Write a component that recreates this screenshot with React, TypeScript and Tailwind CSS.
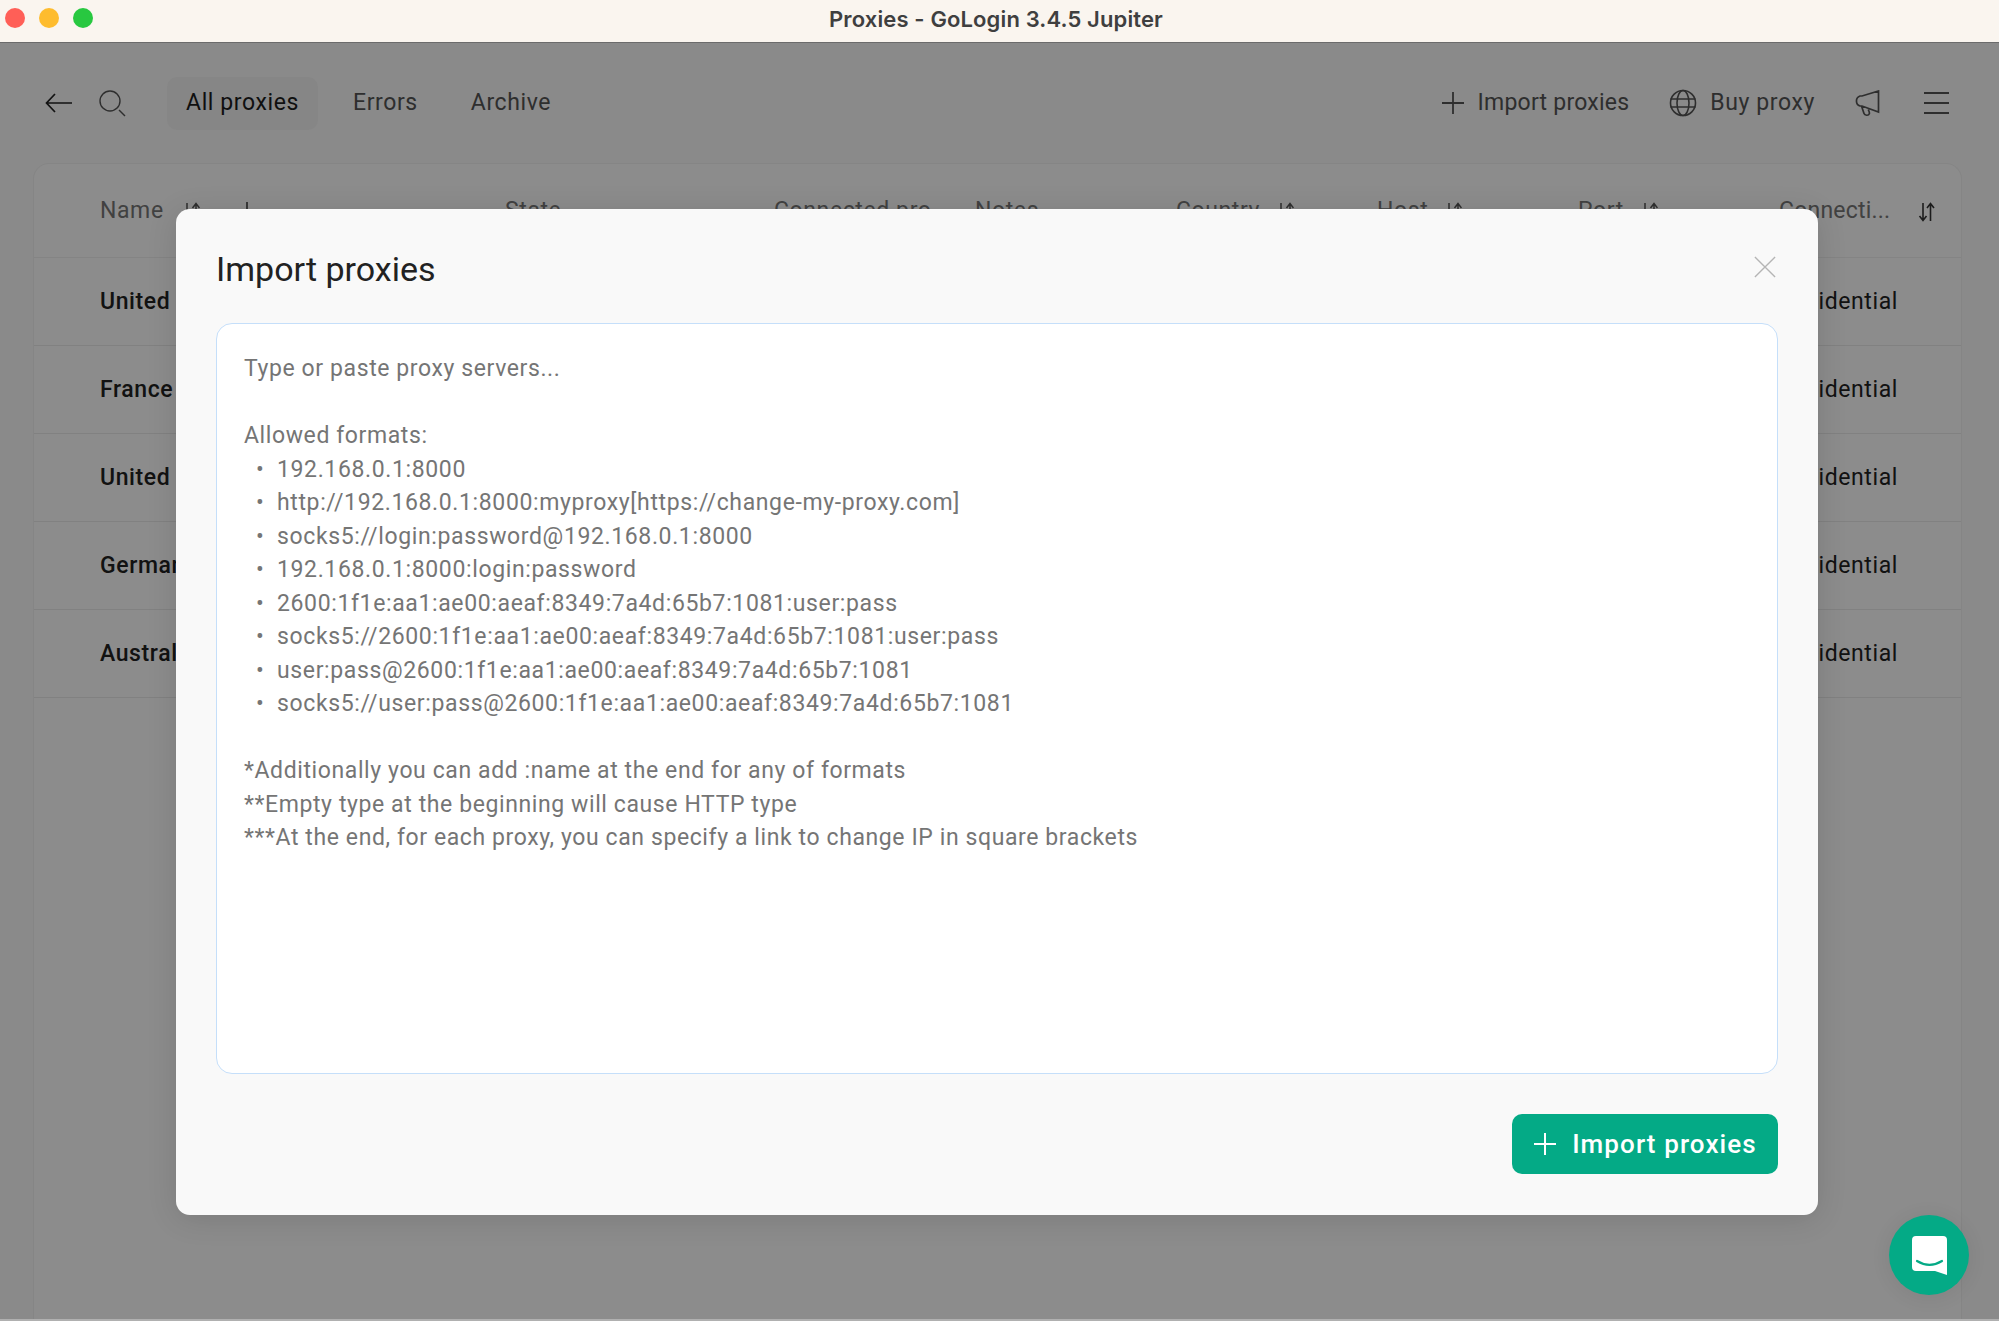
import React from "react";

const Sort = ({ className = "" }: { className?: string }) => (
  <svg viewBox="0 0 18 20" className={`w-[18px] h-[20px] shrink-0 ${className}`} fill="none" stroke="currentColor" strokeWidth="1.6">
    <path d="M5 1v17M12.500 19V2M9 6l3.500-4.500L16 6M1.500 14L5 18.500 8.500 14" />
  </svg>
);

const SortHead = ({ className = "" }: { className?: string }) => (
  <svg viewBox="0 0 18 20" className={`w-[18px] h-[20px] shrink-0 ${className}`} fill="none" stroke="currentColor" strokeWidth="1.5">
    <path d="M5 1v17M14 19V2M10.500 6L14 1.500 17.500 6" />
  </svg>
);

const columns: { label: string; cls: string; sort?: boolean }[] = [
  { label: "State", cls: "w-[269px]" },
  { label: "Connected pro", cls: "w-[201px]" },
  { label: "Notes", cls: "w-[201px]" },
  { label: "Country", cls: "w-[201px]", sort: true },
  { label: "Host", cls: "w-[201px]", sort: true },
  { label: "Port", cls: "w-[201px]", sort: true },
];

const rows = ["United States", "France", "United States", "Germany", "Australia"];

const lines = [
  "192.168.0.1:8000",
  "http://192.168.0.1:8000:myproxy[https://change-my-proxy.com]",
  "socks5://login:password@192.168.0.1:8000",
  "192.168.0.1:8000:login:password",
  "2600:1f1e:aa1:ae00:aeaf:8349:7a4d:65b7:1081:user:pass",
  "socks5://2600:1f1e:aa1:ae00:aeaf:8349:7a4d:65b7:1081:user:pass",
  "user:pass@2600:1f1e:aa1:ae00:aeaf:8349:7a4d:65b7:1081",
  "socks5://user:pass@2600:1f1e:aa1:ae00:aeaf:8349:7a4d:65b7:1081",
];

export default function App() {
  return (
    <div className="relative w-[1999px] h-[1321px] overflow-hidden flex flex-col bg-[#b0b0b0] font-['Roboto',sans-serif]">
      {/* window title bar */}
      <div className="relative h-[43px] shrink-0 bg-[#faf5ef] border-b border-[#6b6b6b] flex items-center justify-center">
        <div className="absolute left-[5px] top-[8px] flex gap-[14px]">
          <span className="w-[20px] h-[20px] rounded-full bg-[#ff5f57]" />
          <span className="w-[20px] h-[20px] rounded-full bg-[#febc2e]" />
          <span className="w-[20px] h-[20px] rounded-full bg-[#28c840]" />
        </div>
        <span className="font-['Inter',sans-serif] font-semibold text-[22px] text-[#3f3f3f] pb-[4px] pr-[7px] tracking-[0.13px]">
          Proxies - GoLogin 3.4.5 Jupiter
        </span>
      </div>

      {/* app */}
      <div className="relative h-[1276px] shrink-0 flex flex-col bg-[#fbfbfb]">
        <header className="h-[120px] shrink-0 flex items-center pl-[45px] pr-[50px] text-[23px] tracking-[0.6px] text-[#555]">
          <svg viewBox="0 0 27 20" className="w-[27px] h-[20px] text-[#222]" fill="none" stroke="currentColor" strokeWidth="1.7">
            <path d="M27 10H1.500M10 1L1.500 10 10 19" />
          </svg>
          <svg viewBox="0 0 28 28" className="ml-[27px] w-[28px] h-[28px] mt-[1px] text-[#555]" fill="none" stroke="currentColor" strokeWidth="1.4">
            <circle cx="11" cy="11" r="10" />
            <path d="M20 20l6 6" />
          </svg>
          <div className="ml-[40px] h-[53px] w-[151px] rounded-[10px] bg-[#f4f4f4] flex items-center justify-center text-[#1c1c1c]">
            All proxies
          </div>
          <span className="ml-[35px]">Errors</span>
          <span className="ml-[53px]">Archive</span>
          <div className="ml-auto flex items-center">
            <svg viewBox="0 0 24 24" className="w-[24px] h-[24px]" fill="none" stroke="currentColor" strokeWidth="1.8">
              <path d="M12 1v22M1 12h22" />
            </svg>
            <span className="ml-[13px] tracking-[0.24px]">Import proxies</span>
            <svg viewBox="0 0 28 28" className="ml-[40px] w-[28px] h-[28px]" fill="none" stroke="currentColor" strokeWidth="1.6">
              <circle cx="14" cy="14" r="12.500" />
              <ellipse cx="14" cy="14" rx="6" ry="12.500" />
              <path d="M1.500 10h25M1.500 18h25" />
            </svg>
            <span className="ml-[13px]">Buy proxy</span>
            <svg viewBox="0 0 26 27" className="ml-[39px] w-[26px] h-[27px]" fill="none" stroke="currentColor" strokeWidth="1.7">
              <path d="M24.500 1v21L8 16H6A5.300 5.300 0 0 1 6 6h2zM7.500 16l2.500 7.500c.7 2 4.500 2.500 5.300.3.500-1.300-.4-2.400-1-4.300" />
            </svg>
            <span className="ml-[44px] w-[25px] flex flex-col gap-[8px]">
              <span className="h-[2px] bg-current" />
              <span className="h-[2px] bg-current" />
              <span className="h-[2px] bg-current" />
            </span>
          </div>
        </header>

        {/* table */}
        <section className="flex-1 ml-[33px] mr-[37px] rounded-t-[16px] bg-[#ffffff] border-t border-l border-r border-[#f2f2f2] text-[23px] tracking-[0.6px]">
          <div className="h-[94px] flex items-center border-b border-[#f0f0f0] text-[#777] pl-[66px] pt-[2px]">
            <div className="w-[405px] shrink-0 flex items-center">
              <span>Name</span>
              <SortHead className="ml-[18px] text-[#555]" />
              <span className="ml-[46px] w-[2px] h-[20px] bg-[#666]" />
            </div>
            {columns.map((c) => (
              <div key={c.label} className={`${c.cls} shrink-0 flex items-center`}>
                <span>{c.label}</span>
                {c.sort && <SortHead className="ml-[16px] text-[#555]" />}
              </div>
            ))}
            <span className="w-[139px] shrink-0 tracking-[0.2px]">Connecti...</span>
            <Sort className="text-[#333]" />
          </div>
          {rows.map((r, i) => (
            <div key={i} className="h-[88px] flex items-center justify-between border-b border-[#ececec] pl-[66px] pr-[63px] pt-[2px] font-medium text-[#222]">
              <span>{r}</span>
              <span className="font-normal">Residential</span>
            </div>
          ))}
        </section>

        {/* dim */}
        <div className="absolute inset-0 bg-black/45 pl-[176px] pt-[166px]">
          <div className="w-[1642px] h-[1006px] rounded-[14px] bg-[#f9f9f9] shadow-[0_4px_30px_rgba(0,0,0,0.12)] px-[40px] flex flex-col">
            <div className="h-[114px] shrink-0 flex items-start justify-between">
              <h2 className="mt-[39px] text-[34px] leading-[42px] text-[#222]">Import proxies</h2>
              <svg viewBox="0 0 24 24" className="mt-[47px] mr-[2px] w-[22px] h-[22px] text-[#b5b5b5]" fill="none" stroke="currentColor" strokeWidth="1.5">
                <path d="M1 1l22 22M23 1L1 23" />
              </svg>
            </div>
            <div className="h-[751px] shrink-0 rounded-[16px] bg-white border border-[#c5dffa] pl-[27px] pt-[28px] text-[23px] leading-[33.520px] tracking-[0.6px] text-[#757575]">
              <p>Type or paste proxy servers...</p>
              <p className="mt-[33.520px]">Allowed formats:</p>
              <ul className="tracking-[0.63px]">
                {lines.map((l) => (
                  <li key={l} className="flex">
                    <span className="w-[33px] pl-[12px]">•</span>
                    <span>{l}</span>
                  </li>
                ))}
              </ul>
              <p className="mt-[33.520px]">*Additionally you can add :name at the end for any of formats</p>
              <p>**Empty type at the beginning will cause HTTP type</p>
              <p>***At the end, for each proxy, you can specify a link to change IP in square brackets</p>
            </div>
            <div className="mt-[40px] flex justify-end">
              <button className="w-[266px] h-[60px] rounded-[10px] bg-[#04aa86] text-white flex items-center justify-center gap-[15px] text-[26px] font-medium tracking-[1.1px]">
                <svg viewBox="0 0 24 24" className="w-[24px] h-[24px]" fill="none" stroke="currentColor" strokeWidth="2">
                  <path d="M12 1v22M1 12h22" />
                </svg>
                Import proxies
              </button>
            </div>
          </div>
        </div>

        {/* chat bubble */}
        <button className="absolute right-[30px] bottom-[24px] w-[80px] h-[80px] rounded-full bg-[#04aa86] shadow-[0_2px_20px_rgba(0,0,0,0.08)] flex items-center justify-center">
          <svg viewBox="0 0 35 39" className="w-[35px] h-[39px]">
            <path d="M4 0h27a4 4 0 0 1 4 4v35l-12-4H4a4 4 0 0 1-4-4V4a4 4 0 0 1 4-4z" fill="#fff" />
            <path d="M5 25c8 5 17 5 25 0" fill="none" stroke="#04aa86" strokeWidth="2.200" strokeLinecap="round" />
          </svg>
        </button>
      </div>
    </div>
  );
}
